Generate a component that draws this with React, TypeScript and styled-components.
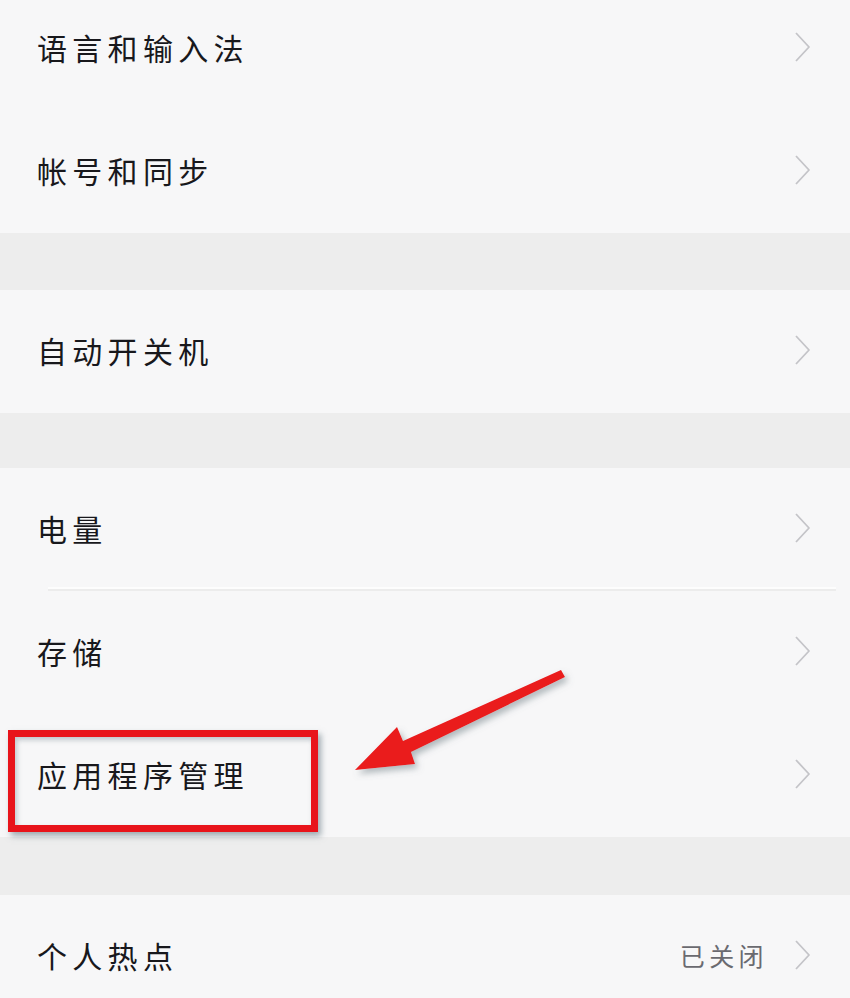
import React from 'react';
import styled, {createGlobalStyle} from 'styled-components';

const GlobalStyle = createGlobalStyle`
  html, body {
    margin: 0;
    padding: 0;
    background: #f7f7f8;
    overflow: hidden;
  }
  body {
    font-family: "Noto Sans CJK SC", "Noto Sans", sans-serif;
  }
`;

const Page = styled.div`
  position: relative;
  width: 850px;
  height: 998px;
  overflow: hidden;
  background: #f7f7f8;
`;

const Scroller = styled.div`
  display: flex;
  flex-direction: column;
  margin-top: -13px;
`;

const Section = styled.div`
  display: flex;
  flex-direction: column;
  background: #f7f7f8;
`;

const Gap = styled.div<{h: number}>`
  height: ${p => p.h}px;
  background: #ededed;
`;

const Row = styled.div<{divider?: boolean}>`
  position: relative;
  display: flex;
  align-items: center;
  height: 123px;
  padding: 0 38px 3px 37px;
  box-sizing: border-box;
  &::after {
    content: "";
    display: ${p => (p.divider ? 'block' : 'none')};
    position: absolute;
    left: 48px;
    right: 14px;
    bottom: 0;
    height: 2px;
    background: #ececec;
    box-shadow: 0 -2px 0 #fdfdfd;
  }
`;

const Label = styled.div`
  flex: 1;
  font-size: 30px;
  letter-spacing: 5.3px;
  color: #18181c;
  line-height: 1;
`;

const Value = styled.div`
  font-size: 25px;
  letter-spacing: 4.4px;
  color: #6a6a70;
  margin-right: 26px;
  line-height: 1;
`;

const Chevron = styled.svg`
  width: 18px;
  height: 32px;
  flex: none;
`;

const HighlightBox = styled.div`
  position: absolute;
  left: 8px;
  top: 16px;
  width: 310px;
  height: 102px;
  box-sizing: border-box;
  border: 7px solid #e8141b;
  box-shadow: 3px 4px 6px rgba(90, 110, 120, 0.55), inset 2px 3px 5px rgba(90, 110, 120, 0.35);
  pointer-events: none;
`;

const ArrowLayer = styled.svg`
  position: absolute;
  left: 0;
  top: 0;
  width: 850px;
  height: 998px;
  pointer-events: none;
`;

function Arrow() {
  return (
    <Chevron viewBox="0 0 18 32">
      <path d="M2 2 L15 16 L2 30" fill="none" stroke="#c4c4c8" strokeWidth="1.8" strokeLinejoin="round" />
    </Chevron>
  );
}

interface IItem {
  label: string;
  value?: string;
  divider?: boolean;
  highlight?: boolean;
}

function SettingRow({label, value, divider, highlight}: IItem) {
  return (
    <Row divider={divider}>
      <Label>{label}</Label>
      {value && <Value>{value}</Value>}
      <Arrow />
      {highlight && <HighlightBox />}
    </Row>
  );
}

const groups: {gap: number; items: IItem[]}[] = [
  {gap: 0, items: [{label: '语言和输入法'}, {label: '帐号和同步'}]},
  {gap: 57, items: [{label: '自动开关机'}]},
  {gap: 55, items: [{label: '电量', divider: true}, {label: '存储'}, {label: '应用程序管理', highlight: true}]},
  {gap: 58, items: [{label: '个人热点', value: '已关闭'}]},
];

export default function App() {
  return (
    <Page>
      <GlobalStyle />
      <Scroller>
        {groups.map((g, i) => (
          <React.Fragment key={i}>
            {g.gap > 0 && <Gap h={g.gap} />}
            <Section>
              {g.items.map(it => (
                <SettingRow key={it.label} {...it} />
              ))}
            </Section>
          </React.Fragment>
        ))}
      </Scroller>
      <ArrowLayer viewBox="0 0 850 998">
        <defs>
          <filter id="shade" x="-20%" y="-20%" width="140%" height="140%">
            <feDropShadow dx="3" dy="4" stdDeviation="3" floodColor="#6a7a80" floodOpacity="0.5" />
          </filter>
        </defs>
        <g filter="url(#shade)">
          <path
            d="M561 670 L565 677 L411 752 L415 764 L355 770 L397 727 L403 741 Z"
            fill="#ea1a1c"
          />
        </g>
      </ArrowLayer>
    </Page>
  );
}
